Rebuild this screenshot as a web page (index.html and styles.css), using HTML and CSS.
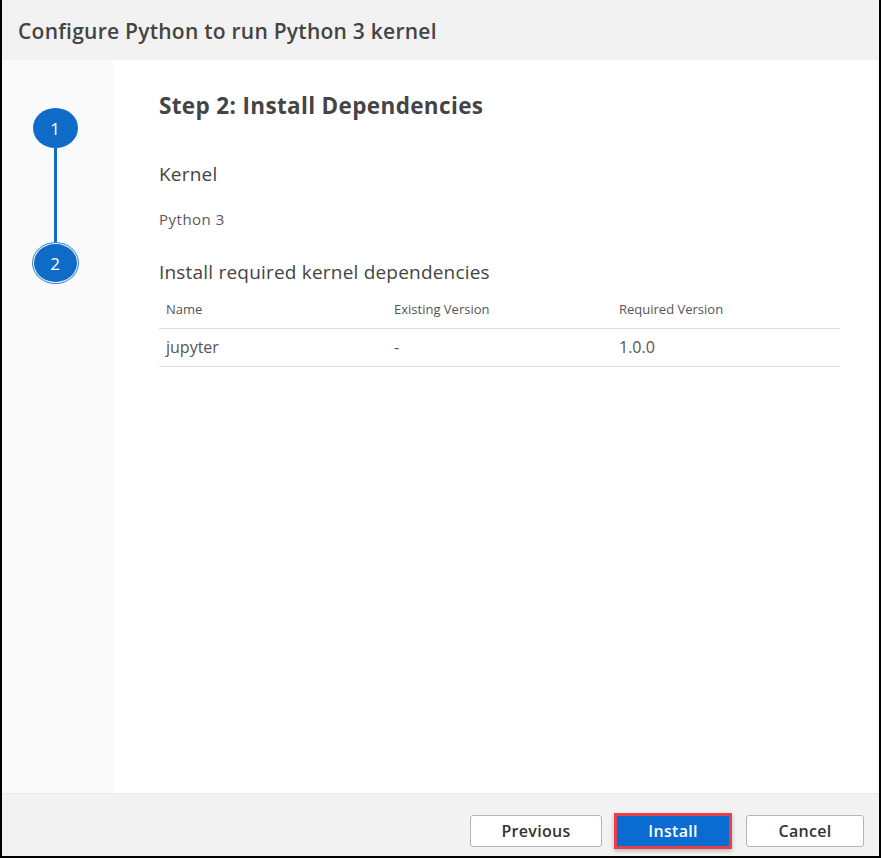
FILE: index.html
```html
<!DOCTYPE html>
<html>
<head>
<meta charset="utf-8">
<link rel="stylesheet" href="styles.css">
</head>
<body>
<div class="dialog">
  <header class="header">
    <h1 class="title">Configure Python to run Python 3 kernel</h1>
  </header>
  <div class="body">
    <aside class="sidebar">
      <div class="step">1</div>
      <div class="connector"></div>
      <div class="step step-current">2</div>
    </aside>
    <main class="content">
      <h2 class="step-title">Step 2: Install Dependencies</h2>
      <h3 class="section-title kernel-title">Kernel</h3>
      <p class="kernel-name">Python 3</p>
      <h3 class="section-title deps-title">Install required kernel dependencies</h3>
      <table class="deps">
        <thead>
          <tr><th class="col-name">Name</th><th class="col-existing">Existing Version</th><th>Required Version</th></tr>
        </thead>
        <tbody>
          <tr><td>jupyter</td><td>-</td><td>1.0.0</td></tr>
        </tbody>
      </table>
    </main>
  </div>
  <footer class="footer">
    <button class="btn">Previous</button>
    <button class="btn btn-primary">Install</button>
    <button class="btn btn-cancel">Cancel</button>
  </footer>
</div>
</body>
</html>
```
FILE: styles.css
```css
* { box-sizing: border-box; }
html, body { margin: 0; padding: 0; background: #fff; }
body { font-family: "Open Sans", "Noto Sans", sans-serif; color: #444; }

.dialog {
  width: 881px;
  height: 858px;
  display: grid;
  grid-template-rows: 60px 1fr 63px;
  border-left: 2px solid #000;
  border-right: 2px solid #000;
  border-bottom: 2px solid #000;
  background: #f2f2f2;
}

.header {
  background: #f2f2f2;
  display: flex;
  align-items: center;
  padding-left: 16px;
}
.title {
  margin: 0;
  font-size: 21px;
  font-weight: 600;
  color: #444;
  letter-spacing: 0.25px;
  line-height: 28px;
  margin-top: 1px;
}

.body {
  display: grid;
  grid-template-columns: 111px 1fr;
  padding-right: 2px;
  background: #f7f7f7;
}

.sidebar {
  background: #fafafa;
  display: flex;
  flex-direction: column;
  align-items: center;
  padding-top: 48px;
  padding-right: 5px;
}
.step {
  width: 45px;
  height: 40px;
  border-radius: 50%;
  background: #0e6cc8;
  color: #fff;
  font-size: 17px;
  display: flex;
  align-items: center;
  justify-content: center;
  flex: none;
}
.step-current {
  border: 1px solid #e8f1fb;
  box-shadow: 0 0 0 1px #3d88d4;
}
.connector {
  width: 3px;
  height: 95px;
  background: #0e6cc8;
  flex: none;
}

.content {
  background: #fff;
  padding: 31px 37px 0 46px;
}
.step-title {
  margin: 0;
  font-size: 22.5px;
  font-weight: 700;
  color: #444;
  line-height: 30px;
  letter-spacing: 0.35px;
}
.section-title {
  margin: 0;
  font-size: 19px;
  font-weight: 400;
  color: #444;
  line-height: 24px;
  letter-spacing: 0.2px;
}
.kernel-title { margin-top: 41px; }
.kernel-name {
  margin: 23px 0 0;
  font-size: 15px;
  color: #5a5a5a;
  line-height: 20px;
  letter-spacing: 0.5px;
}
.deps-title { margin-top: 31px; }

.deps {
  width: 100%;
  border-collapse: collapse;
  margin-top: 6px;
}
.deps th {
  text-align: left;
  font-weight: 400;
  font-size: 13px;
  color: #555;
  padding: 0 7px;
  height: 38px;
  border-bottom: 1px solid #ddd;
}
.deps td {
  text-align: left;
  font-size: 16px;
  color: #555;
  padding: 0 7px;
  height: 38px;
  border-bottom: 1px solid #ddd;
}
.deps .col-name { width: 228px; }
.deps .col-existing { width: 225px; }

.footer {
  background: #f2f2f2;
  display: flex;
  justify-content: flex-end;
  align-items: flex-start;
  gap: 12px;
  padding-top: 21px;
  padding-right: 15px;
  border-top: 1px solid #ececec;
}
.btn {
  height: 32px;
  width: 132px;
  border: 1px solid #b5b5b5;
  border-radius: 3px;
  background: #fff;
  font-family: "Open Sans", "Noto Sans", sans-serif;
  font-size: 16px;
  font-weight: 600;
  letter-spacing: 0.3px;
  color: #333;
  padding: 0;
}
.btn-primary {
  width: 118px;
  height: 36px;
  margin-top: -2px;
  background: #0a6cd0;
  color: #fff;
  border: 3px solid #e8404a;
  border-radius: 0;
  box-shadow: 0 2px 4px rgba(0,0,0,0.25);
}
.btn-cancel { width: 118px; margin-left: 2px; }
```
